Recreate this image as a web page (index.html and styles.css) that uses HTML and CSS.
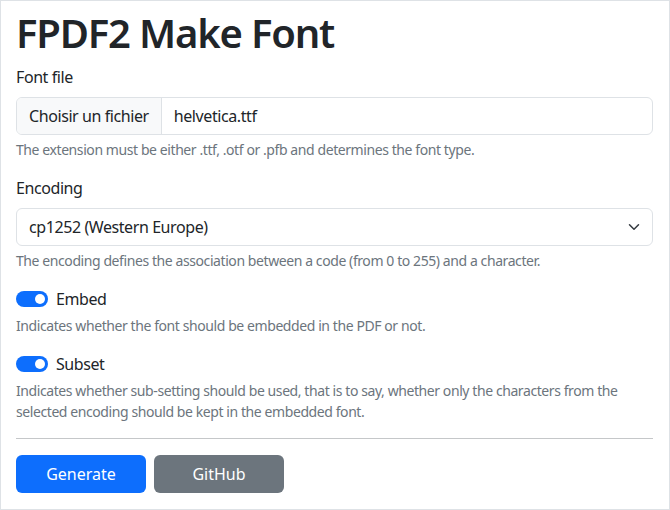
FILE: index.html
```html
<!DOCTYPE html>
<html lang="en">
<head>
<meta charset="utf-8">
<title>FPDF2 Make Font</title>
<link rel="stylesheet" href="styles.css">
</head>
<body>
<div class="page">
  <h1 class="title">FPDF2 Make Font</h1>
  <form class="form">
    <div class="group">
      <label class="label">Font file</label>
      <div class="file">
        <span class="file-btn">Choisir un fichier</span>
        <span class="file-name">helvetica.ttf</span>
      </div>
      <div class="help">The extension must be either .ttf, .otf or .pfb and determines the font type.</div>
    </div>
    <div class="group">
      <label class="label">Encoding</label>
      <div class="select">
        <span>cp1252 (Western Europe)</span>
        <svg class="chev" width="16" height="16" viewBox="0 0 16 16"><path d="M2 5l6 6 6-6" fill="none" stroke="#343a40" stroke-width="2" stroke-linecap="round" stroke-linejoin="round"/></svg>
      </div>
      <div class="help">The encoding defines the association between a code (from 0 to 255) and a character.</div>
    </div>
    <div class="group">
      <div class="check"><span class="switch"><span class="knob"></span></span><span>Embed</span></div>
      <div class="help">Indicates whether the font should be embedded in the PDF or not.</div>
    </div>
    <div class="group">
      <div class="check"><span class="switch"><span class="knob"></span></span><span>Subset</span></div>
      <div class="help">Indicates whether sub-setting should be used, that is to say, whether only the characters from the selected encoding should be kept in the embedded font.</div>
    </div>
    <hr class="rule">
    <div class="actions">
      <button type="button" class="btn btn-primary">Generate</button>
      <button type="button" class="btn btn-secondary">GitHub</button>
    </div>
  </form>
</div>
</body>
</html>
```
FILE: styles.css
```css
* { box-sizing: border-box; }
html, body { margin: 0; padding: 0; background: #fff; }
body {
  font-family: "Noto Sans", "Open Sans", sans-serif;
  color: #212529;
  font-size: 16px;
  line-height: 1.5;
  letter-spacing: -0.026em;
}
.page {
  width: 670px;
  height: 510px;
  border: 1px solid #dee2e6;
  padding: 8px 16px 16px 15px;
}
.title {
  margin: 0 0 8px 0;
  font-size: 40px;
  line-height: 48px;
  font-weight: 600;
  letter-spacing: -0.03em;
}
.form { margin: 0; }
.group { margin-bottom: 16px; }
.label { display: block; margin-bottom: 8px; line-height: 24px; }
.file {
  display: flex;
  height: 38px;
  border: 1px solid #dee2e6;
  border-radius: 6px;
  overflow: hidden;
}
.file-btn {
  background: #f8f9fa;
  border-right: 1px solid #dee2e6;
  padding: 6px 12px;
  line-height: 24px;
}
.file-name { padding: 6px 12px; line-height: 24px; }
.select {
  display: flex;
  align-items: center;
  justify-content: space-between;
  height: 38px;
  border: 1px solid #dee2e6;
  border-radius: 6px;
  padding: 0 12px 0 12px;
}
.chev { width: 12px; height: 12px; }
.help {
  margin-top: 4px;
  font-size: 14px;
  line-height: 21px;
  color: #6c757d;
}
.check {
  display: flex;
  align-items: center;
  gap: 8px;
  height: 24px;
}
.switch {
  position: relative;
  width: 32px;
  height: 16px;
  border-radius: 8px;
  background: #0d6efd;
}
.knob {
  position: absolute;
  right: 3px;
  top: 3px;
  width: 10px;
  height: 10px;
  border-radius: 50%;
  background: #fff;
}
.rule {
  margin: 0 0 16px 0;
  border: 0;
  border-top: 1px solid #c5c7c9;
}
.actions { display: flex; gap: 8px; }
.btn {
  width: 130px;
  height: 38px;
  border: 0;
  border-radius: 6px;
  color: #fff;
  font: inherit;
  font-size: 16px;
}
.btn-primary { background: #0d6efd; }
.btn-secondary { background: #6c757d; }
```
